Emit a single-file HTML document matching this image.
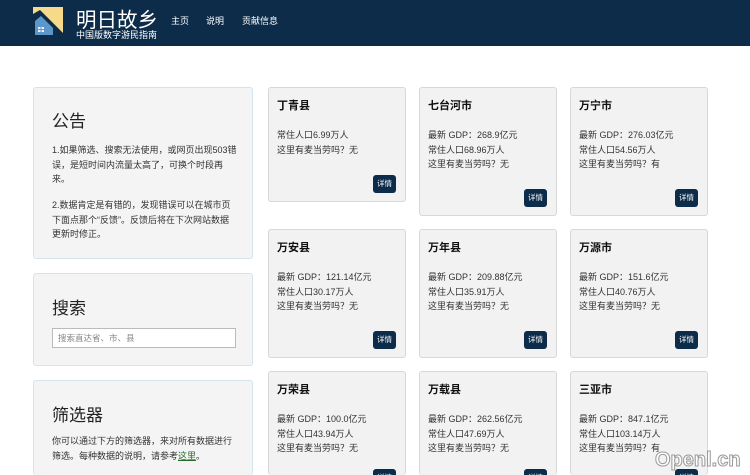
<!DOCTYPE html>
<html><head><meta charset="utf-8"><style>
*{margin:0;padding:0;box-sizing:border-box}
html,body{width:750px;height:475px;overflow:hidden}
body{background:#fff;font-family:"Liberation Sans","Noto Sans CJK SC",sans-serif;color:#222}
#w{position:relative;width:750px;height:475px;overflow:hidden}
.hd{position:absolute;left:0;top:0;width:750px;height:46px;background:#0d2c4a}
.a{position:absolute}
.side{position:absolute;left:33px;width:220px;background:#f4f4f4;border:1px solid #d3e4ef;border-radius:3px}
.side h2{font-weight:normal;font-size:17px;position:absolute;left:18px}
.side p{position:absolute;left:18px;font-size:9px;line-height:14.7px;color:#333;white-space:nowrap}
.c{position:absolute;width:138px;background:#f2f2f2;border:1px solid #d8d8d8;border-radius:3px}
.c b{position:absolute;left:8px;top:9px;font-size:11px;color:#111}
.c p{position:absolute;left:8px;top:40px;font-size:9px;line-height:14.5px;color:#333;white-space:nowrap}
.c i{position:absolute;right:9px;bottom:8px;width:23px;height:18px;background:#0d2c4a;border-radius:3px;color:#fff;font-style:normal;font-size:7.5px;line-height:18px;text-align:center}
.c i.l{bottom:-12px}
</style></head><body><div id="w">
<div class="hd"></div>
<svg class="a" style="left:33px;top:7px" width="30" height="28" viewBox="0 0 30 28">
<rect width="30" height="28" fill="#f7d98a"/>
<polygon points="0,7 7,3 30,26 30,28 0,28" fill="#0d2c4a"/>
<polygon points="2,28 2,14 8,9 20,21 20,28" fill="#5b97c9"/>
<rect x="5" y="20" width="6" height="5" fill="#e8eef5"/>
<line x1="8" y1="20" x2="8" y2="25" stroke="#5b97c9"/><line x1="5" y1="22.5" x2="11" y2="22.5" stroke="#5b97c9"/>
</svg>
<div class="a" style="left:76px;top:3px;color:#fff;font-size:20.5px">明日故乡</div>
<div class="a" style="left:76px;top:28px;color:#fff;font-size:9px">中国版数字游民指南</div>
<div class="a" style="left:171px;top:14px;color:#fff;font-size:9px">主页</div>
<div class="a" style="left:206px;top:14px;color:#fff;font-size:9px">说明</div>
<div class="a" style="left:242px;top:14px;color:#fff;font-size:9px">贡献信息</div>

<div class="side" style="top:87px;height:172px"><h2 style="top:19px">公告</h2>
<p style="top:55px">1.如果筛选、搜索无法使用，或网页出现503错<br>误，是短时间内流量太高了，可换个时段再<br>来。</p>
<p style="top:110px">2.数据肯定是有错的，发现错误可以在城市页<br>下面点那个“反馈”。反馈后将在下次网站数据<br>更新时修正。</p></div>
<div class="side" style="top:273px;height:93px"><h2 style="top:20px">搜索</h2>
<div class="a" style="left:18px;top:54px;width:184px;height:20px;background:#fff;border:1px solid #bbb;font-size:8.5px;color:#888;padding:3px 5px">搜索直达省、市、县</div></div>
<div class="side" style="top:380px;height:95px;border-bottom:none"><h2 style="top:20px">筛选器</h2>
<p style="top:53px">你可以通过下方的筛选器，来对所有数据进行<br>筛选。每种数据的说明，请参考<u style="color:#2a6a2a">这里</u>。</p></div>

<div class="c" style="left:268px;top:87px;height:115px"><b>丁青县</b><p>常住人口6.99万人<br>这里有麦当劳吗？无</p><i>详情</i></div>
<div class="c" style="left:419px;top:87px;height:129px"><b>七台河市</b><p>最新 GDP：268.9亿元<br>常住人口68.96万人<br>这里有麦当劳吗？无</p><i>详情</i></div>
<div class="c" style="left:570px;top:87px;height:129px"><b>万宁市</b><p>最新 GDP：276.03亿元<br>常住人口54.56万人<br>这里有麦当劳吗？有</p><i>详情</i></div>
<div class="c" style="left:268px;top:229px;height:129px"><b>万安县</b><p>最新 GDP：121.14亿元<br>常住人口30.17万人<br>这里有麦当劳吗？无</p><i>详情</i></div>
<div class="c" style="left:419px;top:229px;height:129px"><b>万年县</b><p>最新 GDP：209.88亿元<br>常住人口35.91万人<br>这里有麦当劳吗？无</p><i>详情</i></div>
<div class="c" style="left:570px;top:229px;height:129px"><b>万源市</b><p>最新 GDP：151.6亿元<br>常住人口40.76万人<br>这里有麦当劳吗？无</p><i>详情</i></div>
<div class="c" style="left:268px;top:371px;height:104px;border-bottom:none"><b>万荣县</b><p>最新 GDP：100.0亿元<br>常住人口43.94万人<br>这里有麦当劳吗？无</p><i class="l">详情</i></div>
<div class="c" style="left:419px;top:371px;height:104px;border-bottom:none"><b>万载县</b><p>最新 GDP：262.56亿元<br>常住人口47.69万人<br>这里有麦当劳吗？无</p><i class="l">详情</i></div>
<div class="c" style="left:570px;top:371px;height:104px;border-bottom:none"><b>三亚市</b><p>最新 GDP：847.1亿元<br>常住人口103.14万人<br>这里有麦当劳吗？有</p><i class="l">详情</i></div>
<div class="a" style="left:655px;top:448px;font-size:20px;line-height:24px;color:#fff;-webkit-text-stroke:1px #999;font-weight:bold">Openl.cn</div>
</div></body></html>
